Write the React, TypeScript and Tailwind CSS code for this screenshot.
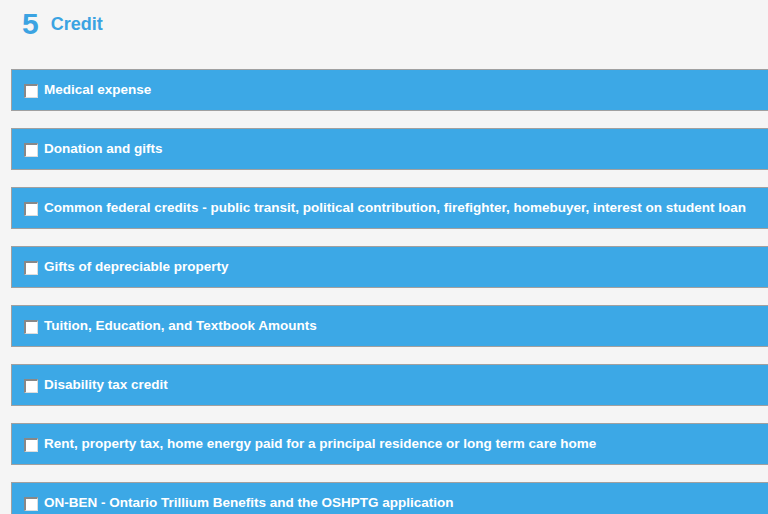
const items = [
  "Medical expense",
  "Donation and gifts",
  "Common federal credits - public transit, political contribution, firefighter, homebuyer, interest on student loan",
  "Gifts of depreciable property",
  "Tuition, Education, and Textbook Amounts",
  "Disability tax credit",
  "Rent, property tax, home energy paid for a principal residence or long term care home",
  "ON-BEN - Ontario Trillium Benefits and the OSHPTG application",
]

export default function App() {
  return (
    <div className="min-h-[514px] overflow-hidden bg-[#f5f5f5] font-['Liberation_Sans',Arial,sans-serif]">
      <div className="flex items-center gap-[12px] pl-[22px] pt-[5px] text-[#3ba3e2] font-bold">
        <span className="text-[30px] leading-[38px]">5</span>
        <span className="text-[18px]">Credit</span>
      </div>
      <div className="flex flex-col gap-[17px] pl-[11px] pt-[26px]">
        {items.map((label) => (
          <div
            key={label}
            className="flex h-[42px] w-[800px] items-center border border-r-0 border-[#a0a0a0] bg-[#3ca8e6] pl-[12px] pt-[1px]"
          >
            <span className="mr-[6px] h-[14px] w-[14px] shrink-0 border-t-2 border-l-2 border-t-[#888] border-l-[#888] border-r border-b border-r-[#ddd] border-b-[#ddd] bg-white" />
            <span className="whitespace-nowrap text-[13.5px] font-bold text-white">{label}</span>
          </div>
        ))}
      </div>
    </div>
  )
}
